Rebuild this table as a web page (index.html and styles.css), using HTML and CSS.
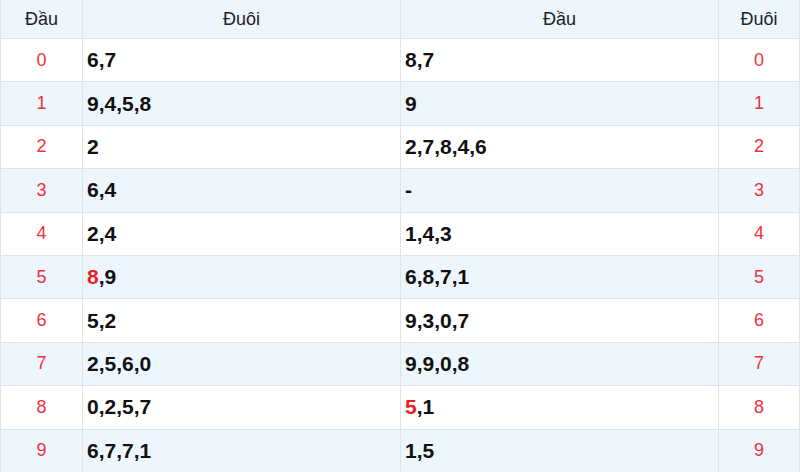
FILE: index.html
```html
<!DOCTYPE html>
<html lang="vi">
<head>
<meta charset="utf-8">
<link rel="stylesheet" href="styles.css">
</head>
<body>
<table class="lt">
  <colgroup>
    <col class="c-num"><col class="c-val"><col class="c-val"><col class="c-num2">
  </colgroup>
  <thead>
    <tr><th>Đầu</th><th>Đuôi</th><th>Đầu</th><th>Đuôi</th></tr>
  </thead>
  <tbody>
    <tr><td class="n">0</td><td class="v">6,7</td><td class="v">8,7</td><td class="n">0</td></tr>
    <tr><td class="n">1</td><td class="v">9,4,5,8</td><td class="v">9</td><td class="n">1</td></tr>
    <tr><td class="n">2</td><td class="v">2</td><td class="v">2,7,8,4,6</td><td class="n">2</td></tr>
    <tr><td class="n">3</td><td class="v">6,4</td><td class="v">-</td><td class="n">3</td></tr>
    <tr><td class="n">4</td><td class="v">2,4</td><td class="v">1,4,3</td><td class="n">4</td></tr>
    <tr><td class="n">5</td><td class="v"><span class="hl">8</span>,9</td><td class="v">6,8,7,1</td><td class="n">5</td></tr>
    <tr><td class="n">6</td><td class="v">5,2</td><td class="v">9,3,0,7</td><td class="n">6</td></tr>
    <tr><td class="n">7</td><td class="v">2,5,6,0</td><td class="v">9,9,0,8</td><td class="n">7</td></tr>
    <tr><td class="n">8</td><td class="v">0,2,5,7</td><td class="v"><span class="hl">5</span>,1</td><td class="n">8</td></tr>
    <tr><td class="n">9</td><td class="v">6,7,7,1</td><td class="v">1,5</td><td class="n">9</td></tr>
  </tbody>
</table>
</body>
</html>
```
FILE: styles.css
```css
html, body {
  margin: 0;
  padding: 0;
  background: #fff;
}
body {
  font-family: "Liberation Sans", Arial, sans-serif;
  color: #000;
}
.lt {
  width: 799px;
  border-collapse: collapse;
  table-layout: fixed;
}
.c-num { width: 82px; }
.c-val { width: 318px; }
.c-num2 { width: 81px; }
.lt th, .lt td {
  border: 1px solid #dfe3e8;
  padding: 0 4px;
}
.lt thead th {
  background: #edf5fd;
  height: 38px;
  font-weight: normal;
  font-size: 18px;
  text-align: center;
  color: #222;
  border-top: 0;
}
.lt tbody td {
  height: 42.4px;
}
.lt tbody tr:nth-child(even) td {
  background: #edf5fd;
}
.lt td.n {
  text-align: center;
  color: #f0303a;
  font-size: 18px;
}
.lt td.v {
  font-weight: bold;
  font-size: 21px;
  text-align: left;
  color: #111;
}
.hl {
  color: #ee1c25;
}
```
